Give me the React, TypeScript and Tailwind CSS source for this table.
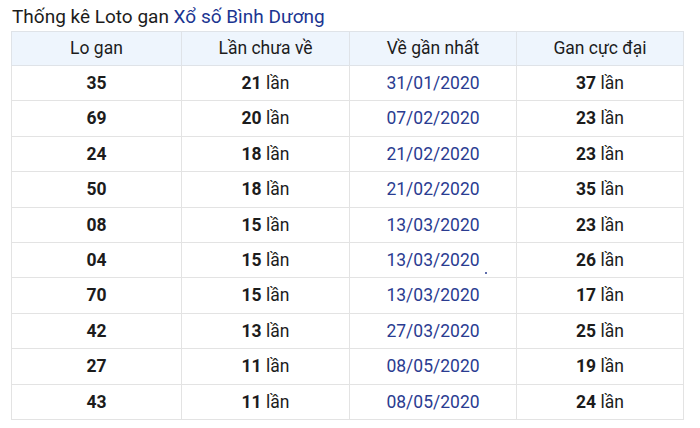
import React from "react";

const rows = [
  ["35", "21", "31/01/2020", "37"],
  ["69", "20", "07/02/2020", "23"],
  ["24", "18", "21/02/2020", "23"],
  ["50", "18", "21/02/2020", "35"],
  ["08", "15", "13/03/2020", "23"],
  ["04", "15", "13/03/2020", "26"],
  ["70", "15", "13/03/2020", "17"],
  ["42", "13", "27/03/2020", "25"],
  ["27", "11", "08/05/2020", "19"],
  ["43", "11", "08/05/2020", "24"],
];

export default function App() {
  return (
    <div
      className="w-[700px] h-[428px] bg-white text-[#1c1c1c] relative"
      style={{ fontFamily: "Roboto, 'Noto Sans', sans-serif" }}
    >
      <div className="pl-[12px] pt-[5px] h-[31px] text-[19px] leading-[24px]">
        Thống kê Loto gan <span className="text-[#1b3591]">Xổ số Bình Dương</span>
      </div>
      <table className="ml-[11px] w-[672px] border-collapse text-[17.5px] table-fixed">
        <colgroup>
          <col className="w-[170px]" />
          <col className="w-[168px]" />
          <col className="w-[167px]" />
          <col className="w-[167px]" />
        </colgroup>
        <thead>
          <tr className="bg-[#eef5fd] h-[34px]">
            {["Lo gan", "Lần chưa về", "Về gần nhất", "Gan cực đại"].map((h) => (
              <th key={h} className="border border-[#dfe3e8] font-normal text-center p-0">
                {h}
              </th>
            ))}
          </tr>
        </thead>
        <tbody>
          {rows.map((r) => (
            <tr key={r[0]} className="h-[35.4px]">
              <td className="border border-[#e3e3e3] text-center font-bold p-0">{r[0]}</td>
              <td className="border border-[#e3e3e3] text-center p-0">
                <span className="font-bold">{r[1]}</span> lần
              </td>
              <td className="border border-[#e3e3e3] text-center p-0 text-[#2a3c91]">{r[2]}</td>
              <td className="border border-[#e3e3e3] text-center p-0">
                <span className="font-bold">{r[3]}</span> lần
              </td>
            </tr>
          ))}
        </tbody>
      </table>
      <div className="absolute left-[485px] top-[272px] w-[2px] h-[2px] rounded-full bg-[#2a3c91]" />
    </div>
  );
}
